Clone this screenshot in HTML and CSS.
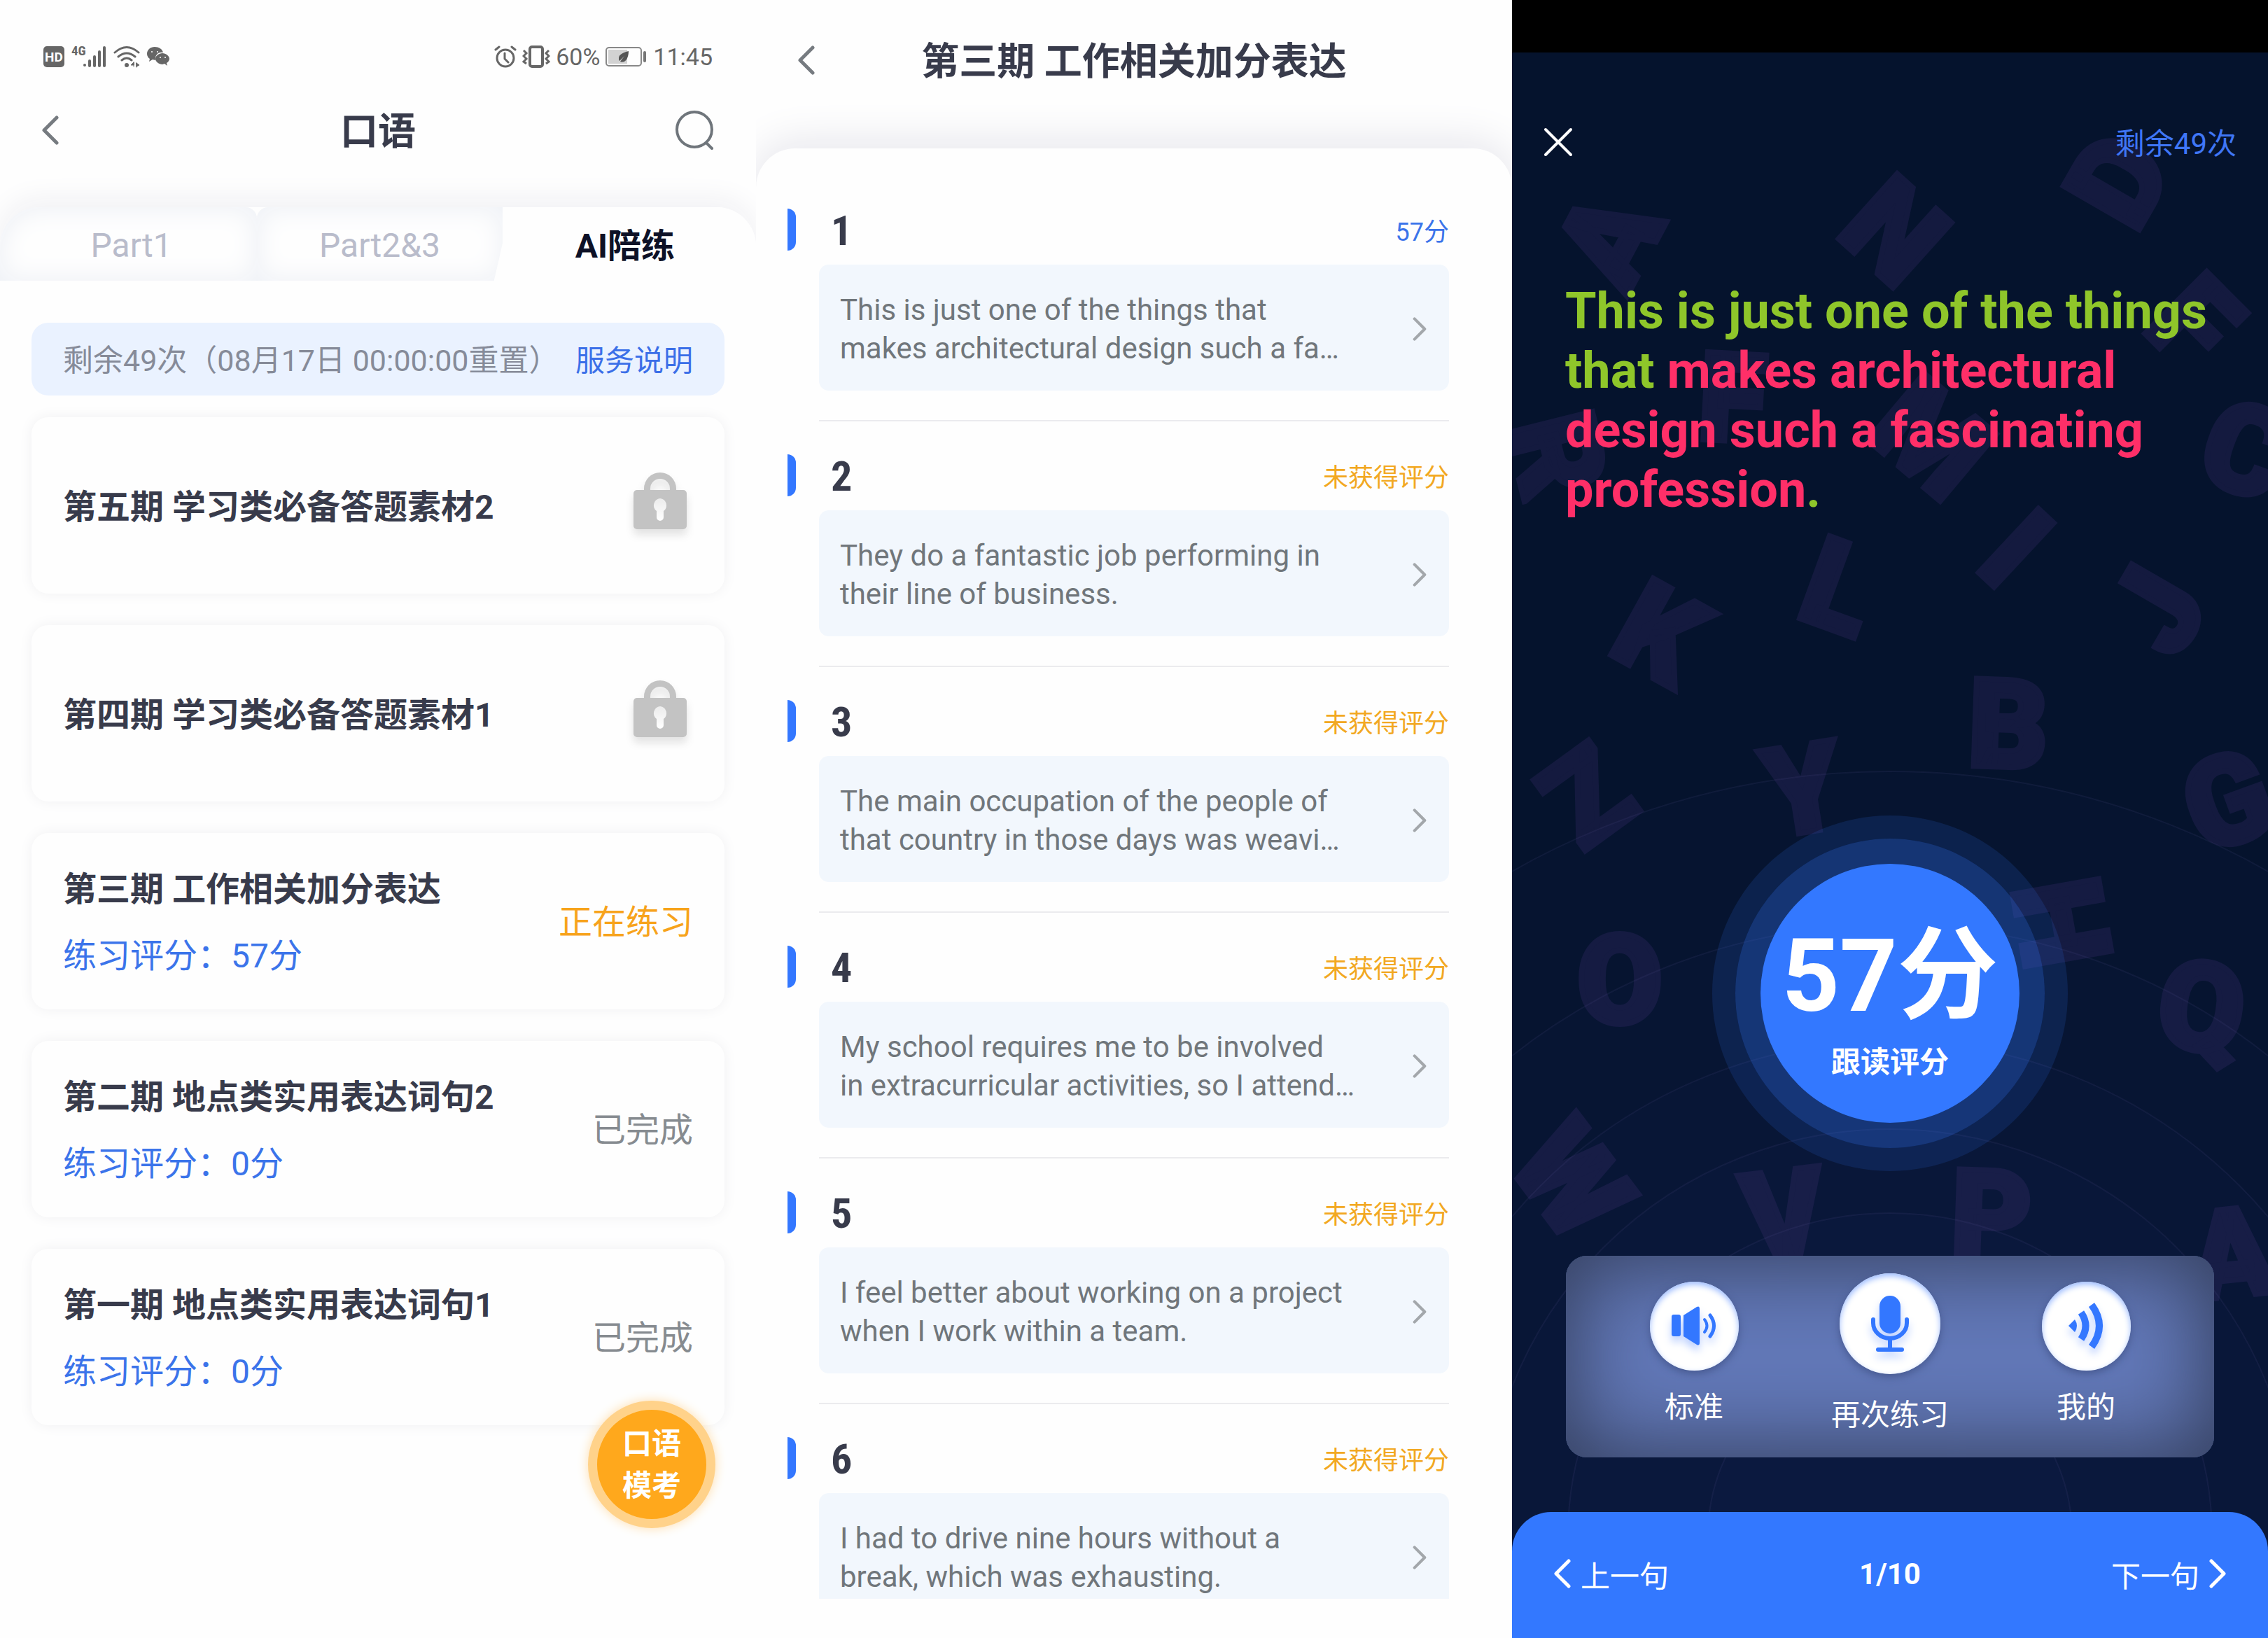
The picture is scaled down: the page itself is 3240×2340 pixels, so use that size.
FILE: index.html
```html
<!DOCTYPE html>
<html lang="zh-CN">
<head>
<meta charset="utf-8">
<title>口语 AI陪练</title>
<link rel="stylesheet" href="styles.css">
</head>
<body>
<svg class="defs" aria-hidden="true">
  <defs>
    <linearGradient id="lock-hole" x1="0" y1="0" x2="0" y2="1"><stop offset="0" stop-color="#ececec"/><stop offset="1" stop-color="#fff"/></linearGradient>
    <symbol id="i-back" viewBox="0 0 24 42"><path d="M21 3 3 21l18 18" fill="none" stroke="currentColor" stroke-width="5" stroke-linecap="round" stroke-linejoin="round"/></symbol>
    <symbol id="i-next" viewBox="0 0 24 42"><path d="m3 3 18 18L3 39" fill="none" stroke="currentColor" stroke-width="5" stroke-linecap="round" stroke-linejoin="round"/></symbol>
    <symbol id="i-lock" viewBox="0 0 76 84">
      <path d="M15 32V26a23 23 0 0 1 46 0v6h-9v-6a14 14 0 0 0-28 0v6z" fill="#c3c3c3"/>
      <rect y="28" width="76" height="56" rx="5" fill="#c3c3c3"/>
      <path d="M38 40a10 10 0 0 1 5 18v9a5 5 0 0 1-10 0v-9a10 10 0 0 1 5-18z" fill="url(#lock-hole)"/>
    </symbol>
  </defs>
</svg>
<main class="screens">

  <section class="screen list-screen">
    <div class="status">
      <div class="status-side">
        <svg class="ico-hd" width="30" height="30" viewBox="0 0 30 30" role="img" aria-label="HD"><rect width="30" height="30" rx="5" fill="#666"/><text x="15" y="22" text-anchor="middle" class="hd-text">HD</text></svg>
        <svg width="50" height="32" viewBox="0 0 50 32"><text x="0" y="14" class="net-text">4G</text><g stroke="#666" stroke-width="4" stroke-linecap="round"><path d="M19 28v0M26 22v7M33 16v13M40 9v20M47 3v26"/></g></svg>
        <svg width="38" height="32" viewBox="0 0 38 32" fill="none" stroke="#666" stroke-width="3" stroke-linecap="round"><path d="M2 10q17-15 34 0M7 16q12-10 24 0M12 21q7-6 14 0"/><circle cx="19" cy="28" r="3" fill="#666" stroke="none"/><path d="m29 24-4 4h4zv6M33 25v6M33 25l4 3-4 2z" fill="#666" stroke-width="1"/></svg>
        <svg class="ico-chat" width="32" height="30" viewBox="0 0 32 30" fill="#666"><path d="M11 1C5 1 0 5 0 11c0 3 2 6 4 7l-1 4 5-3 4 1c-1-7 4-12 11-11-1-5-6-8-12-8z"/><path d="M22 10c-5 0-10 4-10 8s5 8 10 8l3-1 4 3-1-4c2-1 4-4 4-6 0-4-5-8-10-8z"/><g fill="#fff"><circle cx="7" cy="8" r="1"/><circle cx="15" cy="8" r="1"/><circle cx="19" cy="16" r="1"/><circle cx="26" cy="16" r="1"/></g></svg>
      </div>
      <div class="status-side status-right">
        <svg width="32" height="32" viewBox="0 0 32 32" fill="none" stroke="#666" stroke-width="3" stroke-linecap="round"><circle cx="16" cy="18" r="12"/><path d="M15 11v8l5 5M2 6l5-4M30 6l-5-4"/></svg>
        <svg width="40" height="32" viewBox="0 0 40 32" fill="none" stroke="#666" stroke-width="4"><rect x="11" y="2" width="18" height="28" rx="3"/><path d="m2 7 4 4-4 4 4 4-4 4 4 3M38 7l-4 4 4 4-4 4 4 4-4 3" stroke-width="3"/></svg>
        <span>60%</span>
        <svg class="ico-battery" width="60" height="30" viewBox="0 0 60 30"><rect x="1" y="2" width="50" height="26" rx="4" fill="none" stroke="#888" stroke-width="2"/><rect x="4" y="5" width="27" height="20" fill="#d2d2d2"/><path d="M33 7c-8 2-14 5-14 10 0 2 0 3 1 4l7-7-6 8c8 3 12-6 12-15z" fill="#555"/><rect x="54" y="7" width="4" height="16" rx="2" fill="#777"/></svg>
        <span>11:45</span>
      </div>
    </div>
    <header class="topbar">
      <button class="icon-btn" aria-label="返回"><svg width="24" height="42"><use href="#i-back"/></svg></button>
      <h1 class="title">口语</h1>
      <button class="icon-btn" aria-label="搜索"><svg width="56" height="56" viewBox="0 0 56 56" fill="none" stroke="#6f757b" stroke-width="4" stroke-linecap="round"><circle cx="28" cy="27" r="25"/><path d="m45 46 8 8"/></svg></button>
    </header>
    <nav class="tabs">
      <button class="tab tab-one">Part1</button>
      <button class="tab tab-two">Part2&amp;3</button>
      <button class="tab tab-active">AI陪练</button>
    </nav>
    <div class="lessons">
      <div class="notice"><span>剩余49次（08月17日 00:00:00重置）</span><a href="#service">服务说明</a></div>
      <article class="lesson"><h2>第五期 学习类必备答题素材2</h2><svg class="lock" width="76" height="84" role="img" aria-label="未解锁"><use href="#i-lock"/></svg></article>
      <article class="lesson"><h2>第四期 学习类必备答题素材1</h2><svg class="lock" width="76" height="84" role="img" aria-label="未解锁"><use href="#i-lock"/></svg></article>
      <article class="lesson"><div><h2>第三期 工作相关加分表达</h2><p>练习评分：57分</p></div><span class="state state-now">正在练习</span></article>
      <article class="lesson"><div><h2>第二期 地点类实用表达词句2</h2><p>练习评分：0分</p></div><span class="state">已完成</span></article>
      <article class="lesson"><div><h2>第一期 地点类实用表达词句1</h2><p>练习评分：0分</p></div><span class="state">已完成</span></article>
    </div>
    <button class="mock">口语<br>模考</button>
  </section>

  <section class="screen detail-screen">
    <header class="topbar detail-top">
      <button class="icon-btn" aria-label="返回"><svg width="24" height="42"><use href="#i-back"/></svg></button>
      <h1 class="title">第三期 工作相关加分表达</h1>
      <span class="icon-btn"></span>
    </header>
    <div class="sheet">
      <ol class="sentences">
        <li><div class="head"><b>1</b><span class="scored">57分</span></div><a class="sentence" href="#s1"><span>This is just one of the things that<br>makes architectural design such a fa…</span><svg width="20" height="34"><use href="#i-next"/></svg></a></li>
        <li><div class="head"><b>2</b><span>未获得评分</span></div><a class="sentence" href="#s2"><span>They do a fantastic job performing in<br>their line of business.</span><svg width="20" height="34"><use href="#i-next"/></svg></a></li>
        <li><div class="head"><b>3</b><span>未获得评分</span></div><a class="sentence" href="#s3"><span>The main occupation of the people of<br>that country in those days was weavi…</span><svg width="20" height="34"><use href="#i-next"/></svg></a></li>
        <li><div class="head"><b>4</b><span>未获得评分</span></div><a class="sentence" href="#s4"><span>My school requires me to be involved<br>in extracurricular activities, so I attend…</span><svg width="20" height="34"><use href="#i-next"/></svg></a></li>
        <li><div class="head"><b>5</b><span>未获得评分</span></div><a class="sentence" href="#s5"><span>I feel better about working on a project<br>when I work within a team.</span><svg width="20" height="34"><use href="#i-next"/></svg></a></li>
        <li><div class="head"><b>6</b><span>未获得评分</span></div><a class="sentence" href="#s6"><span>I had to drive nine hours without a<br>break, which was exhausting.</span><svg width="20" height="34"><use href="#i-next"/></svg></a></li>
      </ol>
    </div>
  </section>

  <section class="screen speak-screen">
    <svg class="backdrop" viewBox="0 0 1080 2340" preserveAspectRatio="xMidYMin slice" aria-hidden="true">
      <g class="letters">
        <text transform="translate(138 341) rotate(-62)" y="62">A</text>
        <text transform="translate(547 330) rotate(42)" y="62">N</text>
        <text transform="translate(866 256) rotate(-60)" y="62">D</text>
        <text transform="translate(975 460) rotate(45)" y="62">F</text>
        <text transform="translate(315 568) rotate(3)" y="62">F</text>
        <text transform="translate(65 650) rotate(76)" y="62">R</text>
        <text transform="translate(600 625) rotate(40)" y="62">M</text>
        <text transform="translate(1048 642) rotate(20)" y="62">C</text>
        <text transform="translate(720 783) rotate(43)" y="62">I</text>
        <text transform="translate(212 904) rotate(29)" y="62">K</text>
        <text transform="translate(468 838) rotate(20)" y="62">L</text>
        <text transform="translate(920 872) rotate(-60)" y="62">J</text>
        <text transform="translate(107 1137) rotate(-36)" y="62">Z</text>
        <text transform="translate(415 1127) rotate(-9)" y="62">Y</text>
        <text transform="translate(709 1034) rotate(2)" y="62">B</text>
        <text transform="translate(1022 1143) rotate(-20)" y="62">G</text>
        <text transform="translate(785 1318) rotate(80)" y="62">H</text>
        <text transform="translate(154 1399)" y="62">O</text>
        <text transform="translate(985 1438) rotate(8)" y="62">Q</text>
        <text transform="translate(86 1685) rotate(53)" y="62">W</text>
        <text transform="translate(388 1735) rotate(-7)" y="62">V</text>
        <text transform="translate(685 1735) rotate(2)" y="62">P</text>
        <text transform="translate(1028 1790) rotate(-6)" y="62">A</text>
      </g>
      <g class="rings">
        <circle cx="540" cy="2193" r="1091"/><circle cx="540" cy="2193" r="872"/><circle cx="540" cy="2193" r="706"/><circle cx="540" cy="2193" r="580"/><circle cx="540" cy="2193" r="460"/><circle cx="540" cy="2193" r="260"/>
      </g>
    </svg>
    <div class="blackbar"></div>
    <header class="speak-top">
      <button class="icon-btn" aria-label="关闭"><svg width="42" height="42" viewBox="0 0 42 42" stroke="#fff" stroke-width="4" stroke-linecap="round"><path d="m3 3 36 36M39 3 3 39"/></svg></button>
      <span class="left-count">剩余49次</span>
    </header>
    <p class="prompt">This is just one of the things that <em>makes architectural design such a fascinating profession</em>.</p>
    <div class="score"><div class="score-core"><strong>57分</strong><span>跟读评分</span></div></div>
    <div class="controls">
      <button class="control"><i class="disc"><svg width="66" height="56" viewBox="0 0 66 56" fill="#3377ff"><rect x="1" y="12" width="13" height="31" rx="3"/><path d="M18 13 37 1q4-2 4 3v48q0 5-4 3L18 43z"/><g fill="none" stroke="#3377ff" stroke-width="4" stroke-linecap="round"><path d="M48 19q7 9 0 18"/><path d="M56 13q11 15 0 30" stroke-width="5"/></g></svg></i>标准</button>
      <button class="control"><i class="disc disc-big"><svg width="54" height="82" viewBox="0 0 54 82"><rect x="12" y="1" width="30" height="54" rx="15" fill="#3377ff"/><path d="M3 35v5a24 22 0 0 0 48 0v-5M27 63v14M10 78h34" fill="none" stroke="#3377ff" stroke-width="6" stroke-linecap="round"/></svg></i>再次练习</button>
      <button class="control"><i class="disc"><svg width="50" height="66" viewBox="0 0 50 66"><path d="M0 33 9 24q6 9 0 18z" fill="#3377ff"/><g fill="none" stroke="#3377ff" stroke-width="10"><path d="M18 14q13 19 0 38"/><path d="M33 3q22 30 0 60"/></g></svg></i>我的</button>
    </div>
    <footer class="pager">
      <button class="page-btn"><svg width="24" height="42"><use href="#i-back"/></svg>上一句</button>
      <b>1/10</b>
      <button class="page-btn page-next">下一句<svg width="24" height="42"><use href="#i-next"/></svg></button>
    </footer>
  </section>
</main>
</body>
</html>
```
FILE: styles.css
```css
* { box-sizing: border-box; }
body {
  margin: 0;
  background: #fefefe;
  color: #383b4b;
  font-family: Roboto, "Noto Sans CJK SC", sans-serif;
  font-size: 42px;
}
h1, h2, p, ol { margin: 0; padding: 0; }
ol { list-style: none; }
a { color: inherit; text-decoration: none; }
button { padding: 0; border: 0; background: none; color: inherit; font: inherit; cursor: pointer; }
svg { display: block; flex: none; }
.defs { position: absolute; width: 0; height: 0; }

.screens { display: grid; grid-template-columns: repeat(3, minmax(0, 1fr)); grid-template-rows: minmax(0, 1fr); height: 100vh; }
.screen { position: relative; display: flex; flex-direction: column; min-height: 0; overflow: hidden; }

/* status bar */
.status { display: flex; justify-content: space-between; padding: 60px 62px 0; color: #666; font-size: 34px; line-height: 42px; }
.status-side { display: flex; align-items: center; gap: 10px; }
.status-right { gap: 8px; }
.hd-text { font: 700 19px Roboto, sans-serif; fill: #fff; }
.net-text { font: 700 19px "Liberation Sans Narrow", "Roboto Condensed", Roboto, sans-serif; fill: #666; }

/* title bars */
.topbar { display: flex; align-items: center; justify-content: space-between; height: 168px; padding: 0 60px; }
.topbar .icon-btn { display: flex; width: 60px; color: #767b80; }
.topbar .icon-btn:last-child { justify-content: flex-end; }
.title { padding-top: 6px; font-size: 54px; line-height: 64px; font-weight: 700; }

/* tabs */
.tabs { display: flex; height: 105px; margin-top: 26px; border-radius: 56px 56px 0 0; box-shadow: 0 -12px 40px #f1f1f4; font-size: 48px; clip-path: inset(-60px 0 0 0); }
.tab { padding-top: 4px; color: #b9bccb; box-shadow: inset 0 0 40px #eceff5; }
.tab-one { flex: 362; padding-left: 8px; border-radius: 56px 16px 0 0; }
.tab-two { flex: 353; border-radius: 16px 0 0 0; }
.tab-active { flex: 377; margin-left: -12px; padding: 0 0 4px; background: #fefefe; color: #0d1127; font-weight: 700; box-shadow: none; clip-path: polygon(24px 0, 100% 0, 100% 100%, 0 100%); border-radius: 0 56px 0 0; }

/* lesson list */
.lessons { display: flex; flex-direction: column; gap: 45px; padding: 60px 45px 0; }
.notice { display: flex; justify-content: space-between; align-items: center; height: 104px; margin-bottom: -14px; padding: 0 45px 4px; border-radius: 24px; background: #eaf2ff; color: #868b99; }
.notice span { font-size: 43px; }
.notice a { color: #3b6fe8; }
.lesson { display: flex; align-items: center; justify-content: space-between; height: 252px; padding: 4px 45px 0; border-radius: 24px; background: #fefefe; box-shadow: 0 0 20px #f1f1f3; }
.lesson h2 { font-size: 48px; line-height: 95px; font-weight: 700; }
.lesson p { color: #3b74ea; font-size: 48px; line-height: 95px; }
.lock { margin: 0 9px 20px 0; filter: drop-shadow(0 8px 6px #e2e2e2); }
.state { color: #868b90; font-size: 48px; line-height: 64px; }
.state-now { color: #f7a31c; }
.mock { position: absolute; right: 58px; bottom: 157px; width: 182px; height: 182px; padding-top: 2px; border: 13px solid #ffd28a; border-radius: 50%; background: #ffa81c; box-shadow: 0 0 16px #ffdfae; color: #fff; font-size: 42px; font-weight: 700; line-height: 60px; }

/* sentence list */
.detail-top { height: 172px; }
.sheet { display: flex; flex: 1; min-height: 0; margin-top: 40px; padding: 39px 90px 56px; border-radius: 56px 56px 0 0; background: #fefefe; box-shadow: 0 -10px 60px #e6e6ec; }
.sentences { flex: 1; margin-left: -45px; padding-left: 45px; overflow: hidden; }
.sentences li { padding: 47px 0 42px; border-bottom: 2px solid #ebebee; }
.head { display: flex; align-items: center; height: 60px; margin: 0 0 20px -45px; color: #f2a822; font-size: 36px; }
.head::before { content: ""; width: 12px; height: 60px; border-radius: 0 12px 12px 0; background: #3377ff; }
.head b { flex: 1; margin-left: 50px; padding-top: 4px; color: #383b4b; font: 700 60px/60px "Liberation Sans Narrow", "Roboto Condensed", Roboto, sans-serif; }
.head .scored { color: #3b74ea; }
.sentence { display: flex; align-items: center; justify-content: space-between; height: 180px; padding: 4px 32px 0 30px; border-radius: 14px; background: #f2f7fd; color: #70767b; line-height: 55px; }
.sentence svg { color: #a3a7ab; }

/* follow-along screen */
.speak-screen { background: #05132d; color: #fff; }
.speak-screen > * { position: relative; }
.speak-screen .backdrop { position: absolute; inset: 0; width: 100%; height: 100%; }
.letters { font: 900 176px Roboto, sans-serif; fill: #141a3f; stroke: #141a3f; stroke-width: 8; text-anchor: middle; }
.rings { fill: #4a46a8; fill-opacity: .03; stroke: #7a6ab0; stroke-opacity: .1; stroke-width: 2; }
.blackbar { height: 75px; background: #000; }
.speak-top { display: flex; align-items: center; justify-content: space-between; height: 256px; padding: 0 45px; }
.left-count { padding-bottom: 3px; color: #3f76f6; }
.prompt { margin-top: 71px; padding: 0 76px; color: #8fc62a; font-size: 72px; font-weight: 700; line-height: 85px; }
.prompt em { color: #ff2f68; font-style: normal; }
.score { display: flex; align-self: center; margin-top: auto; padding: 36px; border: 33px solid rgba(51, 120, 255, .14); border-radius: 50%; background: rgba(51, 120, 255, .33); background-clip: padding-box; }
.score-core { display: flex; flex-direction: column; align-items: center; width: 370px; height: 370px; padding-top: 86px; border-radius: 50%; background: #3378ff; }
.score-core strong { font-size: 144px; line-height: 150px; }
.score-core span { margin-top: 18px; font-weight: 700; line-height: 60px; }
.controls { display: grid; grid-template-columns: repeat(3, 1fr); align-items: center; height: 288px; margin: 121px 77px 78px; padding: 0 43px 14px; border-radius: 30px; background: #6278b8; box-shadow: inset 0 0 120px 14px #35405f; }
.control { display: flex; flex-direction: column; align-items: center; gap: 32px; line-height: 42px; }
.disc { display: flex; align-items: center; justify-content: center; width: 127px; height: 127px; border-radius: 50%; background: #fff; box-shadow: inset 0 4px 8px #9dbcff, 0 4px 12px #46588f; }
.disc svg { filter: drop-shadow(0 8px 6px #bcd0ff); }
.disc-big { width: 144px; height: 144px; margin-bottom: 6px; }
.pager { display: grid; grid-template-columns: 1fr auto 1fr; align-items: center; height: 180px; padding: 0 60px 4px; border-radius: 56px 56px 0 0; background: #3378ff; }
.page-btn { display: flex; align-items: center; gap: 14px; }
.page-next { justify-self: end; }
```
